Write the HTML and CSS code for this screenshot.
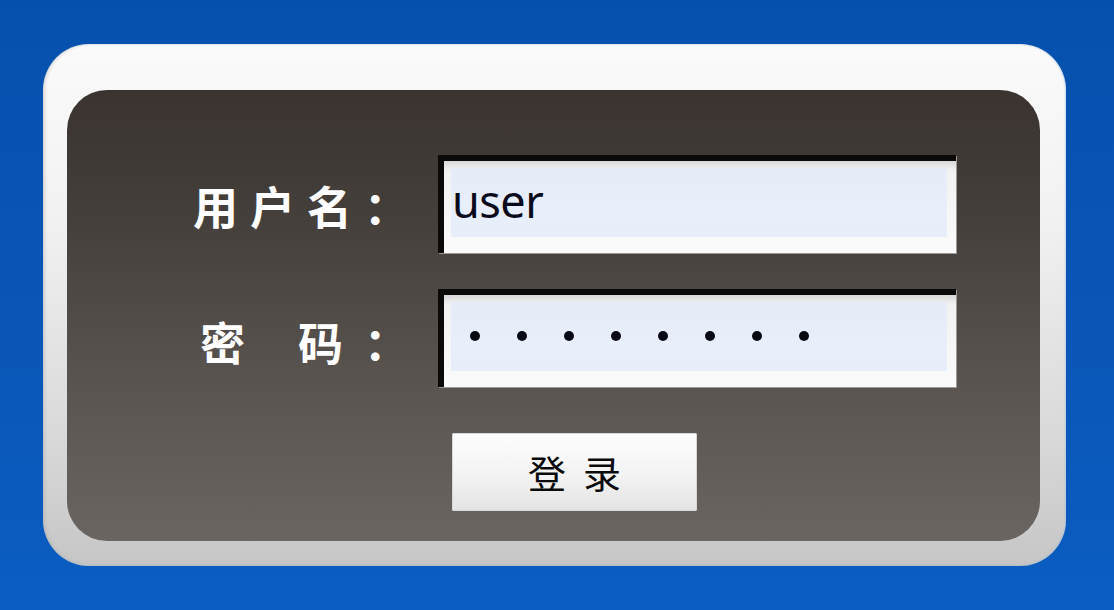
FILE: index.html
```html
<!DOCTYPE html>
<html lang="zh-CN">
<head>
<meta charset="utf-8">
<title>登录</title>
<link rel="stylesheet" href="styles.css">
</head>
<body>
  <div class="frame">
    <div class="panel">
      <div class="row">
        <div class="label label-user"><span>用</span><span>户</span><span>名</span><span>：</span></div>
        <div class="field"><div class="fill"><span class="value">user</span></div></div>
      </div>
      <div class="row">
        <div class="label label-pass"><span class="c1">密</span><span class="c2">码</span><span>：</span></div>
        <div class="field"><div class="fill dots">
          <span class="dot"></span><span class="dot"></span><span class="dot"></span><span class="dot"></span>
          <span class="dot"></span><span class="dot"></span><span class="dot"></span><span class="dot"></span>
        </div></div>
      </div>
      <div class="actions">
        <button class="login">登录</button>
      </div>
    </div>
  </div>
</body>
</html>
```

FILE: styles.css
```css
* { box-sizing: border-box; }
html, body { margin: 0; padding: 0; }
body {
  width: 1114px;
  height: 610px;
  overflow: hidden;
  background: linear-gradient(180deg, #0650ad 0%, #0a57b8 60%, #0b5dc2 100%);
  padding: 44px 48px 0 43px;
  font-family: "Noto Sans CJK SC", "Noto Sans", sans-serif;
}
.frame {
  width: 1023px;
  height: 522px;
  border-radius: 46px;
  background: linear-gradient(180deg, #fbfbfb 0%, #f1f1f1 35%, #d9d9d9 75%, #c6c6c6 100%);
  box-shadow: inset 2px 0 3px rgba(160,160,160,0.35), inset -1px 0 2px rgba(150,190,230,0.5);
  padding: 46px 26px 25px 24px;
}
.panel {
  height: 100%;
  border-radius: 40px;
  background: linear-gradient(180deg, #3a332f 0%, #45403c 30%, #5a5450 65%, #6b6561 100%);
  padding: 65px 0 0 126px;
  display: flex;
  flex-direction: column;
}
.row {
  display: flex;
  align-items: center;
  height: 98px;
}
.row + .row { margin-top: 36px; }
.label {
  width: 245px;
  display: flex;
  color: #fff;
  font-weight: 700;
  font-size: 45px;
  line-height: 1;
}
.label-user { margin-top: 2px; gap: 12px; }
.label-pass { padding-left: 7px; margin-top: 6px; }
.label-pass .c1 { margin-right: 53px; }
.label-pass .c2 { margin-right: 21px; }
.field {
  width: 518px;
  height: 98px;
  border-top: 6px solid #0c0a09;
  border-left: 6px solid #0c0a09;
  background: linear-gradient(180deg, #d8d8d8 0%, #f2f2f2 10%, #fbfbfb 100%);
  padding: 7px 9px 16px 7px;
  box-shadow: 1px 1px 0 #9a9a9a;
}
.fill {
  height: 100%;
  background: linear-gradient(180deg, #e5ecf8 0%, #e8effb 60%, #e6eefa 100%);
  display: flex;
  align-items: center;
}
.value {
  font-family: "Noto Sans", "Open Sans", sans-serif;
  font-size: 45px;
  color: #0a0a1c;
  padding-left: 1px;
  margin-top: -4px;
  letter-spacing: -0.5px;
}
.dots {
  padding-left: 19px;
  gap: 37px;
  padding-bottom: 1px;
}
.dot {
  width: 10px;
  height: 10px;
  border-radius: 50%;
  background: #0a0a14;
}
.actions {
  margin-top: 46px;
  padding-left: 259px;
}
.login {
  width: 245px;
  height: 78px;
  border: 1px solid #d6d6d6;
  border-radius: 1px;
  background: linear-gradient(180deg, #fdfdfd 0%, #f3f3f3 55%, #e4e4e4 100%);
  font-family: "Noto Sans CJK SC", sans-serif;
  font-size: 38px;
  letter-spacing: 17px;
  padding: 0 0 0 17px;
  color: #0a0a0a;
  line-height: 1;
}
```
